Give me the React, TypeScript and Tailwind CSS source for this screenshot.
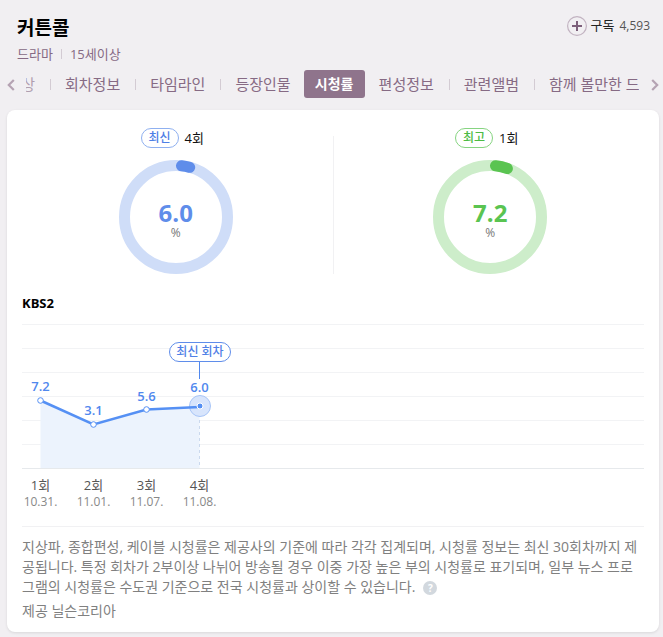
import React from "react";

const tabs = ["상", "회차정보", "타임라인", "등장인물", "시청률", "편성정보", "관련앨범", "함께 볼만한 드"];

const episodes = [
  { name: "1회", date: "10.31.", rating: "7.2", x: 18.5, y: 76.5, labelY: 67 },
  { name: "2회", date: "11.01.", rating: "3.1", x: 71.5, y: 100.5, labelY: 91 },
  { name: "3회", date: "11.07.", rating: "5.6", x: 124.5, y: 85.5, labelY: 77 },
  { name: "4회", date: "11.08.", rating: "6.0", x: 177.5, y: 83, labelY: 68 },
];

const gridLines = [0.5, 24.5, 48.5, 72.5, 96.5, 120.5, 144.5];

function Chevron({ flip }: { flip?: boolean }) {
  return (
    <svg className="relative top-px" width="8" height="12" viewBox="0 0 8 12" fill="none" stroke="#b5a3b3" strokeWidth="2.2">
      <path d={flip ? "M1.2 1l5 5-5 5" : "M6.8 1l-5 5 5 5"} />
    </svg>
  );
}

type DonutProps = {
  badge: string;
  episode: string;
  value: number;
  track: string;
  color: string;
  badgeClass: string;
  textClass: string;
};

function Donut({ badge, episode, value, track, color, badgeClass, textClass }: DonutProps) {
  return (
    <div className="flex flex-1 flex-col items-center">
      <div className="flex h-5 items-center gap-[6px] pr-[7px]">
        <span className={`flex h-5 w-[38px] items-center justify-center rounded-full border text-xs font-medium ${badgeClass}`}>
          {badge}
        </span>
        <span className="text-[13px] leading-5 text-[#111111]">{episode}</span>
      </div>
      <div className="mt-3 grid size-[114px] place-items-center">
        <svg className="col-start-1 row-start-1" width="114" height="114" viewBox="0 0 114 114" fill="none" strokeWidth="11">
          <circle cx="57" cy="57" r="51.5" stroke={track} />
          <circle
            cx="57"
            cy="57"
            r="51.5"
            stroke={color}
            strokeLinecap="round"
            pathLength={100}
            strokeDasharray={`${value - 3.4} 100`}
            transform="rotate(-83.9 57 57)"
          />
        </svg>
        <div className="col-start-1 row-start-1 flex flex-col items-center pt-[7px]">
          <strong className={`text-2xl leading-6 font-bold ${textClass}`}>{value.toFixed(1)}</strong>
          <span className="text-xs leading-4 text-[#777777]">%</span>
        </div>
      </div>
    </div>
  );
}

export default function App() {
  return (
    <div className="min-h-screen bg-[#f1eff2] pb-[5px] font-['Open_Sans','Noto_Sans_CJK_KR',sans-serif]">
      <header className="flex items-start justify-between pt-4 pr-[13px] pl-[17px]">
        <div>
          <h1 className="text-[19px] leading-6 font-bold text-black">커튼콜</h1>
          <p className="mt-1 flex items-center text-[13px] leading-5 text-[#866a84]">
            드라마
            <span className="mx-2 h-[10px] w-px bg-[#d3cbd3]" />
            15세이상
          </p>
        </div>
        <button className="flex h-5 items-center text-[13px] text-[#222222]">
          <svg className="mr-1" width="20" height="20" viewBox="0 0 20 20" fill="none">
            <circle cx="10" cy="10" r="9.4" stroke="#c2b3c1" strokeWidth="1.2" />
            <path d="M10 5v10M5 10h10" stroke="#7c5f7a" strokeWidth="2" />
          </svg>
          <span>구독</span>
          <span className="ml-[5px] text-xs text-[#555555]">4,593</span>
        </button>
      </header>

      <nav className="mt-[6px] flex h-7 items-center justify-between pr-1 pl-[7px]">
        <button aria-label="이전">
          <Chevron />
        </button>
        <ul className="ml-[11px] flex min-w-0 flex-1 items-center overflow-hidden text-[15px] leading-7 whitespace-nowrap text-[#866a84]">
          {tabs.map((tab, i) => {
            if (tab === "시청률") {
              return (
                <li key={tab} className="-ml-[2px] shrink-0">
                  <a href="#rating" aria-current="page" className="flex h-7 w-[61px] items-center justify-center rounded-[3px] bg-[#8f748c] text-sm font-bold text-white">
                    {tab}
                  </a>
                </li>
              );
            }
            const divided = i > 0 && tab !== "편성정보";
            return (
              <li key={tab} className={i === 0 ? "flex w-6 shrink-0 justify-end pr-[15px] opacity-60" : "flex shrink-0 items-center"}>
                {divided && <span className="h-[11px] w-px bg-[#d3cbd3]" />}
                <a href="#tab" className={i === 0 ? "" : i === tabs.length - 1 ? "pl-[14px]" : "pr-[15px] pl-[14px]"}>
                  {tab}
                </a>
              </li>
            );
          })}
        </ul>
        <button aria-label="다음" className="ml-3">
          <Chevron flip />
        </button>
      </nav>

      <main className="mt-3 mr-1 ml-[7px] rounded-lg bg-white pt-[18px] pb-[11px] shadow-[0_1px_3px_rgba(0,0,0,0.1)]">
        <section className="flex px-3">
          <Donut
            badge="최신"
            episode="4회"
            value={6.0}
            track="#cfddf8"
            color="#5f8dea"
            badgeClass="border-[#8fb0f0] text-[#4f80e6]"
            textClass="text-[#5f8dea]"
          />
          <div className="mt-2 w-px bg-[#f1f1f3]" />
          <Donut
            badge="최고"
            episode="1회"
            value={7.2}
            track="#cdedca"
            color="#5ac451"
            badgeClass="border-[#86d481] text-[#4dbb44]"
            textClass="text-[#5ac451]"
          />
        </section>

        <section className="px-[15px]">
          <h2 className="mt-[19px] text-[13px] leading-5 font-bold text-black">KBS2</h2>
          <svg className="mt-[11px] block h-[145px] w-full" aria-label="회차별 시청률">
            {gridLines.map((y, i) => (
              <line key={y} x1="0" x2="100%" y1={y} y2={y} stroke={i === 6 ? "#e6e9ec" : "#f2f3f5"} />
            ))}
            <polygon points="18.5,76.5 71.5,100.5 124.5,85.5 177.5,83 177.5,144 18.5,144" fill="#ecf3fd" />
            <line x1="177.5" x2="177.5" y1="90" y2="144" stroke="#cbd9ee" strokeDasharray="3 3" />
            <line x1="177.5" x2="177.5" y1="38" y2="55" stroke="#5088ee" />
            <rect x="147.5" y="18.5" width="61" height="19" rx="9.5" fill="white" stroke="#5f8dea" />
            <text x="178" y="32" textAnchor="middle" fontSize="12" fontWeight="500" fill="#4f80e6">
              최신 회차
            </text>
            <circle cx="178" cy="82" r="10.5" fill="#d8e5fc" stroke="#a8c5f7" />
            <polyline points="18.5,76.5 71.5,100.5 124.5,85.5 177.5,83" fill="none" stroke="#5590f4" strokeWidth="2.5" />
            {episodes.map((e, i) => (
              <g key={e.name}>
                {i < 3 ? (
                  <circle cx={e.x} cy={e.y} r="2.8" fill="white" stroke="#5590f4" />
                ) : (
                  <circle cx="178" cy="82" r="3" fill="#5590f4" stroke="white" />
                )}
                <text x={e.x} y={e.labelY} textAnchor="middle" fontSize="13" fontWeight="600" fill="#5088ee">
                  {e.rating}
                </text>
              </g>
            ))}
          </svg>
          <ul className="-ml-2 flex pt-[6px] text-center">
            {episodes.map((e) => (
              <li key={e.name} className="w-[53px]">
                <div className="text-[13px] leading-5 text-[#555555]">{e.name}</div>
                <div className="text-xs leading-[14px] text-[#888888]">{e.date}</div>
              </li>
            ))}
          </ul>
          <div className="mt-[17px] border-t border-[#f1f1f3] pt-[10px] text-sm leading-5 text-[#808080]">
            <p className="break-all">
              지상파, 종합편성, 케이블 시청률은 제공사의 기준에 따라 각각 집계되며, 시청률 정보는 최신 30회차까지 제공됩니다. 특정 회차가 2부이상 나뉘어 방송될 경우 이중 가장 높은 부의 시청률로 표기되며, 일부 뉴스 프로그램의 시청률은 수도권 기준으로 전국 시청률과 상이할 수 있습니다.
              <button aria-label="도움말" className="ml-2 inline-flex size-[14px] items-center justify-center rounded-full bg-[#d2d8de] align-middle text-[10px] leading-none font-bold text-white">
                ?
              </button>
            </p>
            <p className="mt-1">제공 닐슨코리아</p>
          </div>
        </section>
      </main>
    </div>
  );
}
